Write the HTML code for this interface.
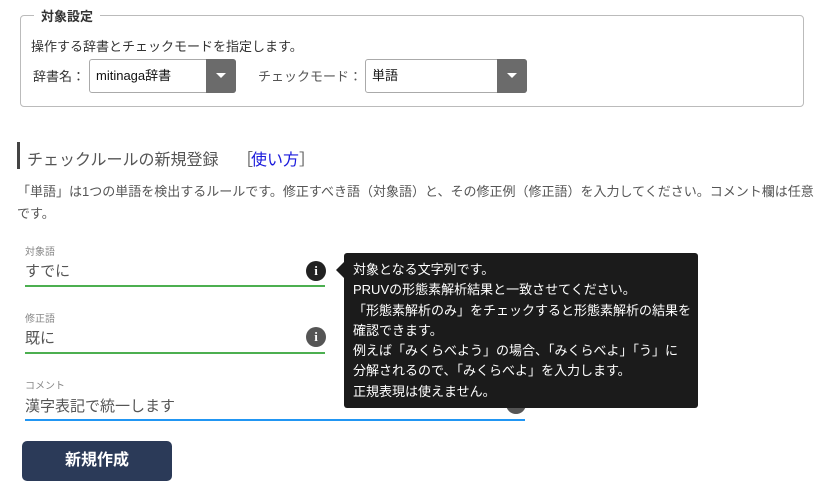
<!DOCTYPE html>
<html><head><meta charset="utf-8"><style>
*{margin:0;padding:0;box-sizing:border-box}
body{width:826px;height:494px;background:#fff;font-family:"Liberation Sans","Noto Sans CJK JP",sans-serif;color:#333;position:relative;overflow:hidden}
.a{position:absolute;white-space:nowrap}
.fs{position:absolute;left:20px;top:15px;width:784px;height:92px;border:1px solid #bbb;border-radius:4px}
.sel{position:absolute;height:34px;border:1px solid #aaa;border-radius:3px;background:#fff;font-size:13px;color:#111;line-height:32px;padding-left:6px}
.arr{position:absolute;right:-1px;top:-1px;width:30px;height:34px;background:#6b6b6b;border-radius:0 3px 3px 0}
.arr:after{content:"";position:absolute;left:10px;top:14px;border-left:5px solid transparent;border-right:5px solid transparent;border-top:5px solid #fff}
.lbl{font-size:10px;color:#888}
.val{font-size:15px;color:#555}
.info{position:absolute;width:20px;height:20px;border-radius:50%;background:#555;color:#fff;font-weight:bold;font-size:13px;text-align:center;line-height:20px;font-family:"Liberation Serif",serif}
.tip{position:absolute;left:344px;top:253px;width:354px;height:155px;background:#1b1b1b;border-radius:3px;color:#fff;font-size:13px;line-height:20.3px;padding:7px 0 0 9px}
.tip:before{content:"";position:absolute;left:-8px;top:9px;border-top:8px solid transparent;border-bottom:8px solid transparent;border-right:8px solid #1b1b1b}
</style></head><body>
<div class="fs"></div>
<div class="a" style="left:34px;top:6px;background:#fff;padding:0 7px;font-size:13px;font-weight:bold;color:#333">対象設定</div>
<div class="a" style="left:31px;top:36px;font-size:13px;color:#333">操作する辞書とチェックモードを指定します。</div>
<div class="a" style="left:33px;top:66px;font-size:13px;color:#333">辞書名：</div>
<div class="sel" style="left:89px;top:59px;width:147px">mitinaga辞書<div class="arr"></div></div>
<div class="a" style="left:258px;top:66px;font-size:13px;color:#555">チェックモード：</div>
<div class="sel" style="left:365px;top:59px;width:162px">単語<div class="arr"></div></div>

<div class="a" style="left:17px;top:142px;width:3px;height:27px;background:#444"></div>
<div class="a" style="left:27px;top:146px;font-size:16px;color:#555">チェックルールの新規登録</div>
<div class="a" style="left:237px;top:146px;font-size:16px;color:#555">［</div>
<div class="a" style="left:251px;top:146px;font-size:16px;color:#1a1adc">使い方</div>
<div class="a" style="left:299px;top:146px;font-size:16px;color:#555">］</div>
<div class="a" style="left:17px;top:181px;font-size:13px;color:#555;line-height:22px;white-space:normal;width:800px">「単語」は1つの単語を検出するルールです。修正すべき語（対象語）と、その修正例（修正語）を入力してください。コメント欄は任意です。</div>

<div class="a lbl" style="left:25px;top:243px">対象語</div>
<div class="a val" style="left:25px;top:260px">すでに</div>
<div class="a" style="left:25px;top:285px;width:300px;height:2px;background:#4caf50"></div>
<div class="info" style="left:306px;top:261px;background:#222">i</div>

<div class="a lbl" style="left:25px;top:310px">修正語</div>
<div class="a val" style="left:25px;top:327px">既に</div>
<div class="a" style="left:25px;top:352px;width:300px;height:2px;background:#4caf50"></div>
<div class="info" style="left:306px;top:327px">i</div>

<div class="a lbl" style="left:25px;top:377px">コメント</div>
<div class="a val" style="left:25px;top:395px">漢字表記で統一します</div>
<div class="a" style="left:25px;top:419px;width:500px;height:2px;background:#2196f3"></div>
<div class="info" style="left:506px;top:394px">i</div>

<div class="tip">対象となる文字列です。<br>PRUVの形態素解析結果と一致させてください。<br>「形態素解析のみ」をチェックすると形態素解析の結果を<br>確認できます。<br>例えば「みくらべよう」の場合、「みくらべよ」「う」に<br>分解されるので、「みくらべよ」を入力します。<br>正規表現は使えません。</div>

<div class="a" style="left:22px;top:441px;width:150px;height:40px;background:#2b3a58;border-radius:5px;color:#fff;font-size:16px;font-weight:bold;text-align:center;line-height:40px">新規作成</div>
</body></html>
